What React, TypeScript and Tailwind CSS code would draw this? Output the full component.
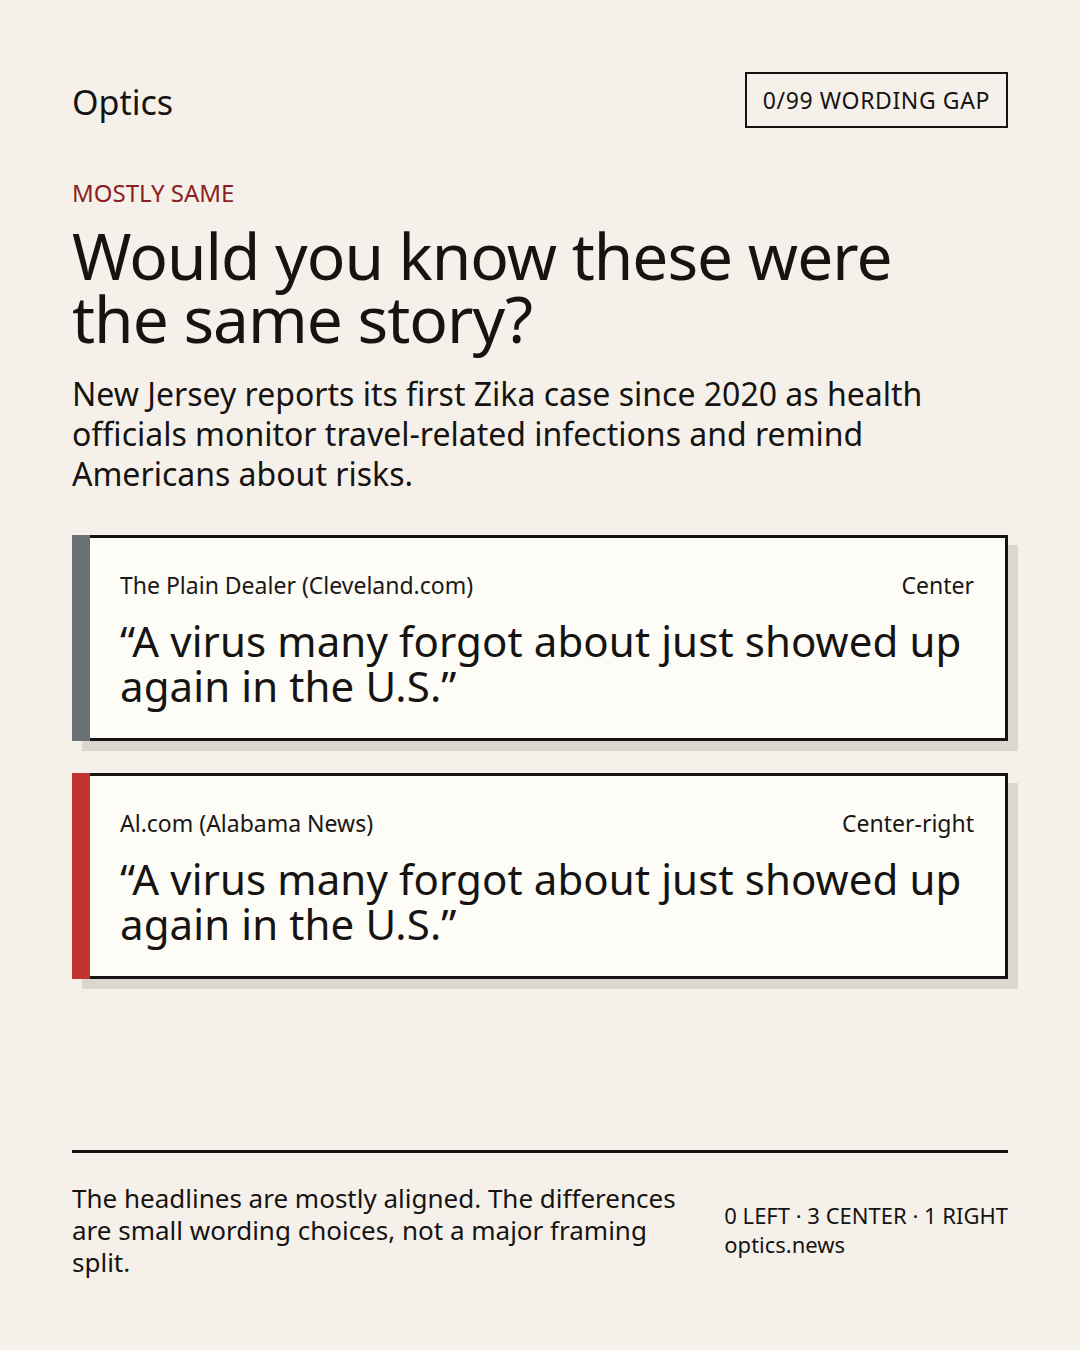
import React from "react";

const font = { fontFamily: '"Noto Sans", "Open Sans", sans-serif' };

function Card({ source, lean, headline, bar }: { source: string; lean: string; headline: string; bar: string }) {
  return (
    <div className="flex shadow-[10px_10px_0_0_#dbd7cf]">
      <div className={`w-[18px] shrink-0 ${bar}`} />
      <div className="flex-1 bg-[#fdfcf7] border-t-[3px] border-r-[3px] border-b-[3px] border-[#161412] pl-[30px] pr-[31px] pt-[32px] pb-[30px]">
        <div className="flex justify-between text-[23px] leading-[30px] text-[#1a1714]">
          <span>{source}</span>
          <span>{lean}</span>
        </div>
        <div className="mt-[18px] text-[42px] leading-[45px] tracking-[0.1px] text-[#161412]">{headline}</div>
      </div>
    </div>
  );
}

export default function App() {
  return (
    <div style={font} className="w-[1080px] h-[1350px] bg-[#f5f1ea] text-[#161412] px-[72px] pt-[72px] flex flex-col">
      <div className="flex justify-between items-center h-[56px]">
        <div className="text-[34px] leading-[40px] mt-[4px]">Optics</div>
        <div className="h-[56px] border-2 border-[#161412] px-[16px] flex items-center text-[23px] tracking-[0.6px]">0/99 WORDING GAP</div>
      </div>
      <div className="mt-[50px] text-[24px] leading-[30px] text-[#8b1f1f]">MOSTLY SAME</div>
      <h1 className="mt-[16px] max-w-[860px] text-[64px] leading-[63px] tracking-[-1px]">Would you know these were the same story?</h1>
      <p className="mt-[24px] text-[32px] leading-[40px] pr-[40px]">
        New Jersey reports its first Zika case since 2020 as health officials monitor travel-related infections and remind Americans about risks.
      </p>
      <div className="mt-[41px] flex flex-col gap-[32px]">
        <Card source="The Plain Dealer (Cleveland.com)" lean="Center" headline="“A virus many forgot about just showed up again in the U.S.”" bar="bg-[#6b7075]" />
        <Card source="Al.com (Alabama News)" lean="Center-right" headline="“A virus many forgot about just showed up again in the U.S.”" bar="bg-[#c0352f]" />
      </div>
      <div className="mt-auto mb-[72px] border-t-[3px] border-[#161412] pt-[29px] flex justify-between items-center gap-[48px]">
        <p className="flex-1 text-[26px] leading-[32px]">
          The headlines are mostly aligned. The differences are small wording choices, not a major framing split.
        </p>
        <div className="shrink-0 text-[22px] leading-[29px]">
          <div>0 LEFT · 3 CENTER · 1 RIGHT</div>
          <div>optics.news</div>
        </div>
      </div>
    </div>
  );
}
